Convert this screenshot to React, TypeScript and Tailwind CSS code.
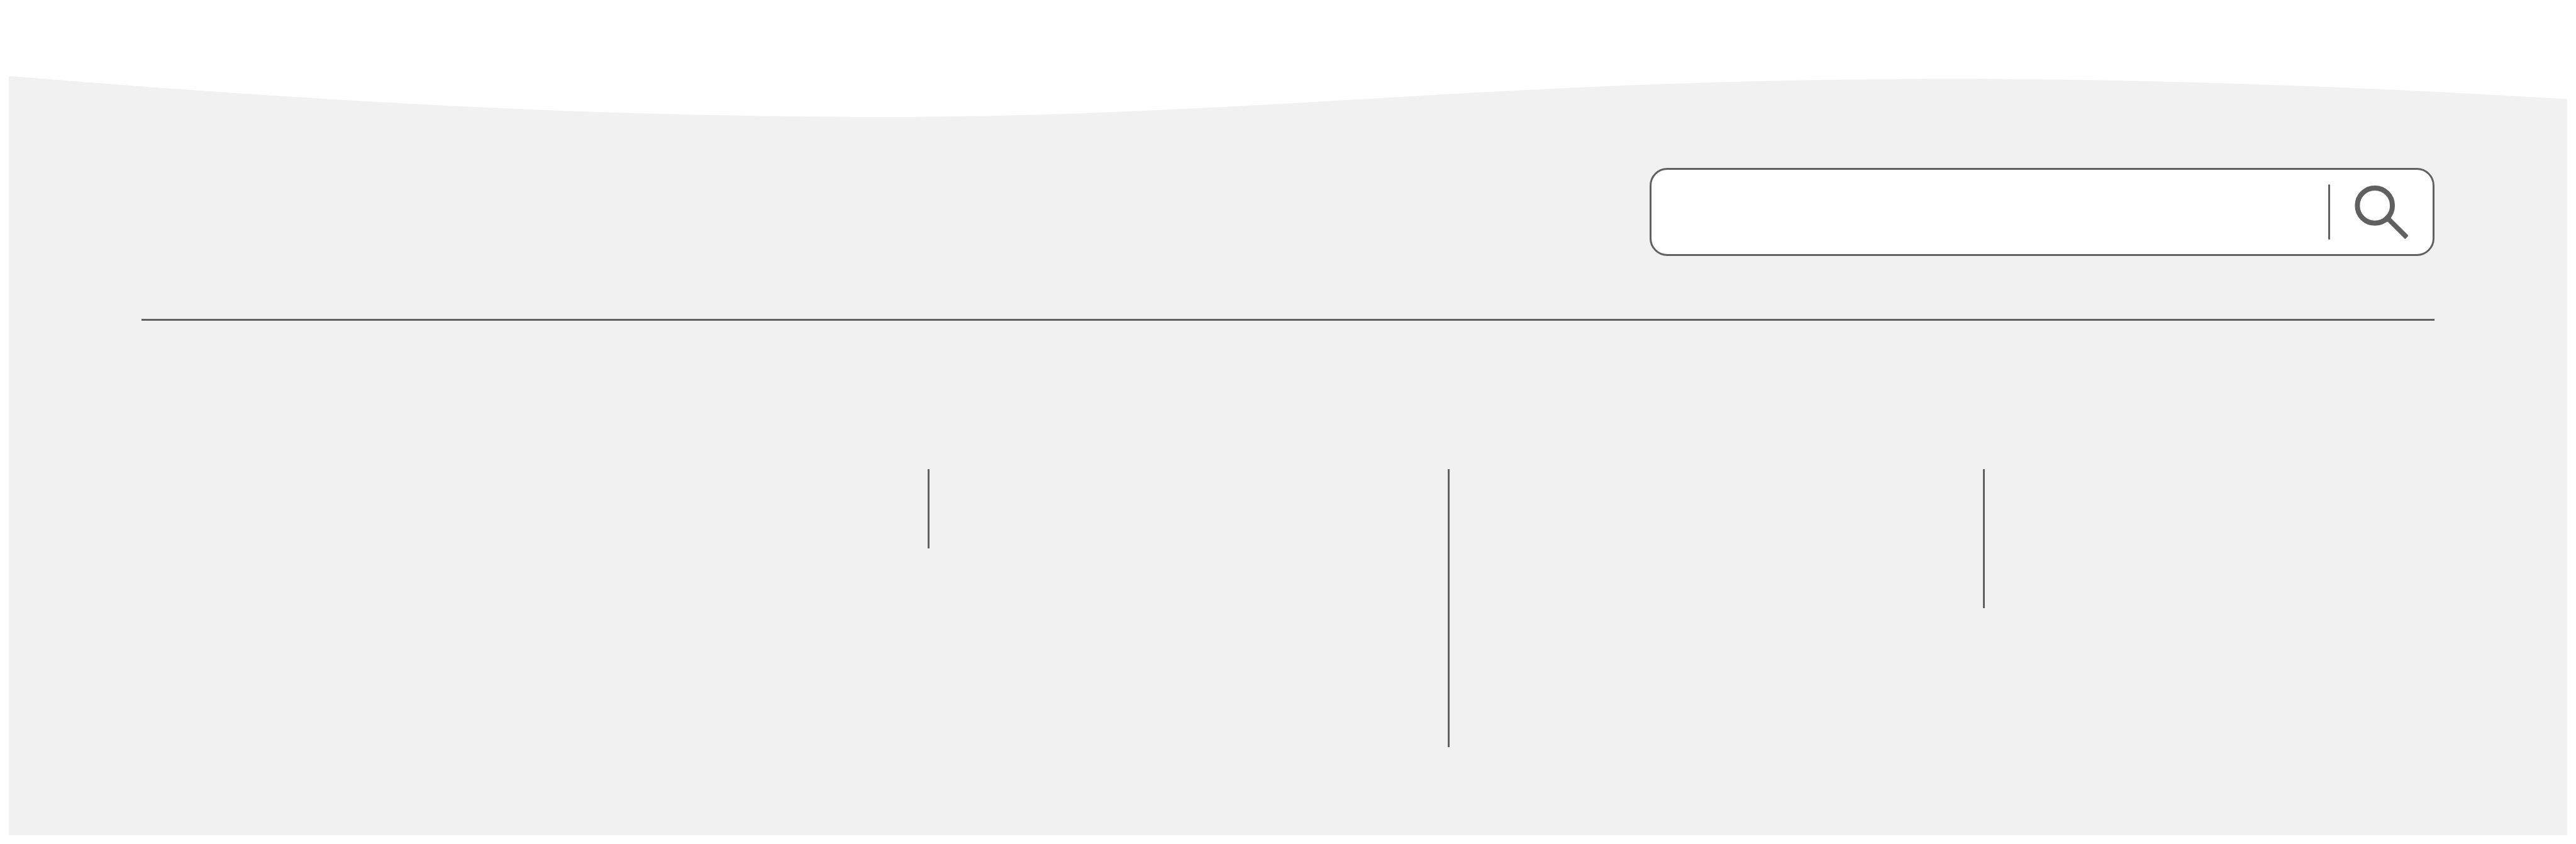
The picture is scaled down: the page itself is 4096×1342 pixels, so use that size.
function Wave() {
  return (
    <svg
      className="block h-[66px] w-full"
      viewBox="21 185 6296 102"
      preserveAspectRatio="none"
      aria-hidden="true"
    >
      <path
        fill="#f1f1f1"
        d="M21 186C738 246 1456 287 2173 287C2550 287 2957 267 3347 243.5C3837 213 4300 193.3 4776 193.3C5290 193.3 5803 212 6317 243V288H21Z"
      />
    </svg>
  );
}

function SearchIcon() {
  return (
    <svg className="size-[85px]" viewBox="0 0 132 132" aria-hidden="true">
      <circle cx="50" cy="49.5" r="43.3" fill="none" stroke="#606060" strokeWidth="12.4" />
      <path
        fill="#606060"
        d="M78.5 90.5Q81 88.5 82.7 90.3L123 131Q124.3 132.6 125.7 131.5L131.3 125.7Q132.8 124 131 121.7L90 80.7Q88.6 79.2 90.5 77L80 72L72 80Z"
      />
    </svg>
  );
}

function SearchBar() {
  return (
    <form
      role="search"
      className="flex h-[140px] w-[1248px] max-w-full items-center self-end overflow-hidden rounded-[28px] border-3 border-[#606060] bg-white"
      onSubmit={(event) => event.preventDefault()}
    >
      <input
        type="search"
        aria-label="Search"
        className="h-full min-w-0 flex-1 bg-transparent px-10 font-['Liberation_Sans',sans-serif] text-5xl text-[#606060] outline-none"
      />
      <span className="h-[88px] w-[3px] rounded-full bg-[#606060]" />
      <button
        type="submit"
        aria-label="Submit search"
        className="flex h-full w-[163px] items-center justify-center"
      >
        <SearchIcon />
      </button>
    </form>
  );
}

export default function App() {
  return (
    <div className="bg-white px-[14px] pt-[120px] pb-[14px]">
      <footer>
        <Wave />
        <div className="flex flex-col bg-[#f1f1f1] px-[211px] pt-[81px] pb-[140px]">
          <SearchBar />
          <hr className="mt-[100px] h-[3px] border-0 bg-[#606060]" />
          <div className="mt-[236px] grid grid-cols-[1250fr_827fr_851fr_718fr] items-start">
            <div />
            <div className="h-[126px] border-l-3 border-[#606060]" />
            <div className="h-[442px] border-l-3 border-[#606060]" />
            <div className="h-[221px] border-l-3 border-[#606060]" />
          </div>
        </div>
      </footer>
    </div>
  );
}
